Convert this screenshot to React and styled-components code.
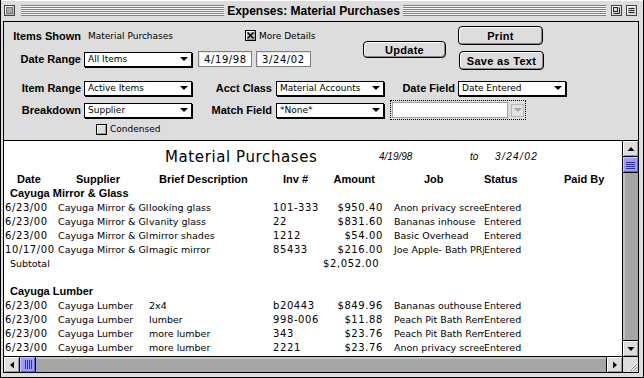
import React from "react";
import styled, { createGlobalStyle } from "styled-components";

const chicago = `"Liberation Sans", Arial, sans-serif`;
const geneva = `"DejaVu Sans", Verdana, sans-serif`;

const GlobalStyle = createGlobalStyle`
  html, body {
    margin: 0;
    padding: 0;
    background: #fff;
  }
  body {
    width: 644px;
    height: 378px;
    overflow: hidden;
  }
  * {
    box-sizing: border-box;
  }
`;

const Window = styled.div`
  width: 644px;
  height: 378px;
  background: #dddddd;
  border: 1px solid #000;
  border-top: none;
  display: flex;
  flex-direction: column;
`;

const TitleBar = styled.div`
  height: 21px;
  flex: none;
  display: flex;
  align-items: center;
  padding: 0 6px 0 3px;
  background: #dddddd;
  box-shadow: inset 0 1px 0 #fff;
`;

const Stripes = styled.div`
  flex: 1;
  height: 11px;
  background: repeating-linear-gradient(
    to bottom,
    #808080 0,
    #808080 1px,
    #f8f8f8 1px,
    #f8f8f8 2px
  );
  margin-left: ${(p) => p.$ml || 0}px;
  margin-right: ${(p) => p.$mr || 0}px;
`;

const TitleText = styled.div`
  font: bold 12px ${chicago};
  color: #000;
  padding: 0 3px;
  white-space: nowrap;
`;

const BoxIcon = styled.svg`
  flex: none;
  display: block;
  margin-left: ${(p) => p.$ml || 0}px;
`;

const Content = styled.div`
  flex: 1;
  margin: 0 4px 4px 2px;
  border: 1px solid #000;
  display: flex;
  flex-direction: column;
  min-height: 0;
`;

const Panel = styled.div`
  height: 119px;
  flex: none;
  border-bottom: 1px solid #000;
  background: #dddddd;
  display: flex;
  flex-direction: column;
`;

const TopSection = styled.div`
  display: flex;
  align-items: flex-start;
  height: 48px;
`;

const LeftBlock = styled.div`
  width: 308px;
  display: flex;
  flex-direction: column;
`;

const Row = styled.div`
  display: flex;
  align-items: center;
  height: ${(p) => p.$h || 16}px;
  margin-top: ${(p) => p.$mt || 0}px;
  margin-left: ${(p) => p.$ml || 0}px;
`;

const Label = styled.div`
  width: ${(p) => p.$w}px;
  flex: none;
  text-align: right;
  font: bold 11px ${chicago};
  color: #000;
  margin-right: ${(p) => (p.$gap === undefined ? 4 : p.$gap)}px;
  white-space: nowrap;
`;

const Value = styled.div`
  width: ${(p) => p.$w}px;
  flex: none;
  padding-left: 4px;
  font: 9px ${geneva};
  color: #000;
  white-space: nowrap;
`;

const SmallText = styled.span`
  font: 9px ${geneva};
  color: #000;
  margin-left: 3px;
  white-space: nowrap;
`;

const PopupBox = styled.div`
  width: 108px;
  height: 15px;
  flex: none;
  border: 1px solid #000;
  box-shadow: 1px 1px 0 #000;
  background: #fff;
  display: flex;
  align-items: center;
  padding-left: 3px;
  margin-right: ${(p) => p.$mr || 0}px;
  font: 9px ${geneva};
  color: #000;
  white-space: nowrap;
`;

const PopupArrow = styled.span`
  margin-left: ${(p) => (p.$center ? 0 : "auto")};
  margin-right: ${(p) => (p.$center ? 0 : 3)}px;
  width: 0;
  height: 0;
  border-left: 4px solid transparent;
  border-right: 4px solid transparent;
  border-top: 4px solid ${(p) => p.$color || "#000"};
`;

const DateField = styled.div`
  width: ${(p) => p.$w}px;
  height: 16px;
  flex: none;
  margin-left: ${(p) => p.$ml || 0}px;
  border: 1px solid #808080;
  box-shadow: inset 1px 1px 0 #e6e6e6;
  background: #fff;
  padding-left: 5px;
  display: flex;
  align-items: center;
  font: 10px ${geneva};
  letter-spacing: 0.6px;
  color: #000;
`;

const MacButton = styled.div`
  width: ${(p) => p.$w}px;
  height: ${(p) => p.$h}px;
  flex: none;
  border: 1px solid #000;
  border-radius: 4px;
  background: #dddddd;
  box-shadow: inset 1px 1px 0 #fff, inset -1px -1px 0 #8a8a8a;
  display: flex;
  align-items: center;
  justify-content: center;
  font: bold 11px ${chicago};
  letter-spacing: 0.3px;
  color: #000;
  margin-top: ${(p) => p.$mt || 0}px;
  margin-left: ${(p) => p.$ml || 0}px;
`;

const ButtonColumn = styled.div`
  display: flex;
  flex-direction: column;
  gap: 6px;
  margin-top: 4px;
  margin-left: 12px;
`;

const FocusRing = styled.div`
  width: 136px;
  height: 20px;
  flex: none;
  margin-left: 6px;
  border: 1px dotted #000;
  padding: 1px;
  display: flex;
  align-items: center;
`;

const DisabledInput = styled.div`
  width: 116px;
  height: 16px;
  border: 1px solid #a0a0a0;
  background: #fff;
`;

const DisabledArrow = styled.div`
  width: 13px;
  height: 13px;
  margin-left: 3px;
  border: 1px solid #b8b8b8;
  background: #e2e2e2;
  display: flex;
  align-items: center;
  justify-content: center;
`;

const ScrollArea = styled.div`
  flex: 1;
  min-height: 0;
  display: grid;
  grid-template-columns: 1fr 16px;
  grid-template-rows: 1fr 16px;
`;

const Report = styled.div`
  background: #fff;
  overflow: hidden;
  padding-left: 1px;
  min-height: 0;
`;

const ReportTitleRow = styled.div`
  height: 31px;
  display: flex;
  align-items: center;
  padding-left: 160px;
`;

const ReportTitle = styled.div`
  font: 15px ${geneva};
  letter-spacing: 0.6px;
  color: #000;
  width: 214px;
  white-space: nowrap;
`;

const ItalicDate = styled.div`
  font: italic 10px ${chicago};
  letter-spacing: ${(p) => p.$ls || 0}px;
  color: #000;
  width: ${(p) => p.$w}px;
  flex: none;
`;

const cols = "53px 91px 124px 50px 60px 101px 80px 1fr";

const HeaderRow = styled.div`
  display: grid;
  grid-template-columns: ${cols};
  height: 14px;
  align-items: center;
  font: bold 11px ${chicago};
  color: #000;
`;

const HeadCell = styled.div`
  padding-left: ${(p) => p.$pl || 0}px;
  padding-right: ${(p) => p.$pr || 0}px;
  text-align: ${(p) => (p.$right ? "right" : "left")};
  white-space: nowrap;
`;

const GroupHeader = styled.div`
  height: 14px;
  display: flex;
  align-items: center;
  padding-left: 5px;
  font: bold 11px ${chicago};
  color: #000;
`;

const DataRow = styled.div`
  display: grid;
  grid-template-columns: ${cols};
  height: 14px;
  align-items: center;
  font: 9.5px ${geneva};
  color: #000;
`;

const Cell = styled.div`
  overflow: hidden;
  white-space: nowrap;
  padding-left: ${(p) => p.$pl || 0}px;
  padding-right: ${(p) => p.$pr || 0}px;
  text-align: ${(p) => (p.$right ? "right" : "left")};
  grid-column: ${(p) => p.$span || "auto"};
  font-size: ${(p) => (p.$num ? "10px" : "inherit")};
  letter-spacing: ${(p) => (p.$num ? "0.6px" : "normal")};
`;

const Spacer = styled.div`
  height: 14px;
`;

const VScroll = styled.div`
  border-left: 1px solid #000;
  display: flex;
  flex-direction: column;
  background: #a6a6a6;
  box-shadow: inset 2px 0 0 #c2c2c2;
  min-height: 0;
`;

const HScroll = styled.div`
  border-top: 1px solid #000;
  display: flex;
  background: #a6a6a6;
  box-shadow: inset 0 2px 0 #c2c2c2;
`;

const ArrowBox = styled.div`
  flex: none;
  width: ${(p) => (p.$horiz ? "16px" : "auto")};
  height: ${(p) => (p.$horiz ? "auto" : "16px")};
  background: #dddddd;
  box-shadow: inset 1px 1px 0 #fff, inset -1px -1px 0 #999;
  display: flex;
  align-items: center;
  justify-content: center;
  ${(p) => p.$side}: 1px solid #000;
  margin-top: ${(p) => (p.$end && !p.$horiz ? "auto" : 0)};
  margin-left: ${(p) => (p.$end && p.$horiz ? "auto" : 0)};
`;

const Thumb = styled.div`
  flex: none;
  width: ${(p) => (p.$horiz ? "16px" : "auto")};
  height: ${(p) => (p.$horiz ? "auto" : "16px")};
  background: #9c9cff;
  box-shadow: inset 1px 1px 0 #ccccff, inset -1px -1px 0 #6666cc;
  ${(p) => (p.$horiz ? "border-right" : "border-bottom")}: 1px solid #000;
  display: flex;
  align-items: center;
  justify-content: center;
`;

const GrowBox = styled.div`
  border-top: 1px solid #000;
  border-left: 1px solid #000;
  background: #dddddd;
  display: flex;
  align-items: flex-end;
  justify-content: flex-end;
`;

const Triangle = ({ dir }) => {
  const d = {
    up: "M0.5 5L4 1L7.5 5Z",
    down: "M0.5 1L4 5L7.5 1Z",
    left: "M5 0.5L1 4L5 7.5Z",
    right: "M1 0.5L5 4L1 7.5Z",
  }[dir];
  const horiz = dir === "left" || dir === "right";
  return (
    <svg width={horiz ? 6 : 8} height={horiz ? 8 : 6} viewBox={horiz ? "0 0 6 8" : "0 0 8 6"}>
      <path d={d} fill="#000" />
    </svg>
  );
};

const Grip = ({ horiz }) => (
  <svg width={horiz ? 8 : 9} height={horiz ? 9 : 8}>
    {[0, 2, 4, 6].map((o) =>
      horiz ? (
        <rect key={o} x={o + 1} y="0" width="1" height="9" fill="#333399" />
      ) : (
        <rect key={o} x="0" y={o + 1} width="9" height="1" fill="#333399" />
      )
    )}
  </svg>
);

const Checkbox = ({ checked }) => (
  <svg width="11" height="11" viewBox="0 0 11 11" style={{ display: "block", flex: "none" }}>
    <rect x="0.5" y="0.5" width="10" height="10" fill={checked ? "#c8c8c8" : "#dcdcdc"} stroke="#000" />
    <path d="M1.5 9V1.5H9" stroke="#fff" fill="none" />
    <path d="M2 9.5H9.5V2" stroke="#999" fill="none" />
    {checked && (
      <path d="M2.5 2.5L8.5 8.5M8.5 2.5L2.5 8.5" stroke="#000" strokeWidth="1.7" />
    )}
  </svg>
);

const Popup = ({ children, mr }) => (
  <PopupBox $mr={mr}>
    {children}
    <PopupArrow />
  </PopupBox>
);

const groups = [
  {
    name: "Cayuga Mirror & Glass",
    rows: [
      ["6/23/00", "Cayuga Mirror & Glass", "looking glass", "101-333", "$950.40", "Anon privacy screen", "Entered"],
      ["6/23/00", "Cayuga Mirror & Glass", "vanity glass", "22", "$831.60", "Bananas inhouse", "Entered"],
      ["6/23/00", "Cayuga Mirror & Glass", "mirror shades", "1212", "$54.00", "Basic Overhead", "Entered"],
      ["10/17/00", "Cayuga Mirror & Glass", "magic mirror", "85433", "$216.00", "Joe Apple- Bath PRJ", "Entered"],
    ],
    subtotal: "$2,052.00",
  },
  {
    name: "Cayuga Lumber",
    rows: [
      ["6/23/00", "Cayuga Lumber", "2x4", "b20443", "$849.96", "Bananas outhouse", "Entered"],
      ["6/23/00", "Cayuga Lumber", "lumber", "998-006", "$11.88", "Peach Pit Bath Remodel", "Entered"],
      ["6/23/00", "Cayuga Lumber", "more lumber", "343", "$23.76", "Peach Pit Bath Remodel", "Entered"],
      ["6/23/00", "Cayuga Lumber", "more lumber", "2221", "$23.76", "Anon privacy screen", "Entered"],
    ],
  },
];

const App = () => {
  return (
    <>
      <GlobalStyle />
      <Window>
        <TitleBar>
          <BoxIcon width="11" height="11" viewBox="0 0 11 11">
            <rect x="0.5" y="0.5" width="10" height="10" fill="#bdbdbd" stroke="#444" />
            <path d="M1.5 9V1.5H9" stroke="#fff" fill="none" />
            <rect x="2.5" y="2.5" width="6" height="6" fill="#a8a8a8" stroke="#777" />
          </BoxIcon>
          <Stripes $ml={6} />
          <TitleText>Expenses: Material Purchases</TitleText>
          <Stripes $mr={5} />
          <BoxIcon width="11" height="11" viewBox="0 0 11 11">
            <rect x="0.5" y="0.5" width="10" height="10" fill="#dcdcdc" stroke="#444" />
            <path d="M1.5 9V1.5H9" stroke="#fff" fill="none" />
            <rect x="2.5" y="2.5" width="4" height="4" fill="none" stroke="#222" />
            <path d="M2.5 8.5H8.5V2.5" stroke="#222" fill="none" />
          </BoxIcon>
          <BoxIcon $ml={4} width="11" height="11" viewBox="0 0 11 11">
            <rect x="0.5" y="0.5" width="10" height="10" fill="#dcdcdc" stroke="#444" />
            <path d="M1.5 9V1.5H9" stroke="#fff" fill="none" />
            <path d="M2.5 3.5H8.5M2.5 5.5H8.5M2.5 7.5H8.5" stroke="#222" />
          </BoxIcon>
        </TitleBar>

        <Content>
          <Panel>
            <TopSection>
              <LeftBlock>
                <Row $h={13} $mt={7}>
                  <Label $w={77} $gap={3}>Items Shown</Label>
                  <Value $w={161}>Material Purchases</Value>
                  <Checkbox checked />
                  <SmallText>More Details</SmallText>
                </Row>
                <Row $mt={9}>
                  <Label $w={77} $gap={3}>Date Range</Label>
                  <Popup mr={1}>All Items</Popup>
                  <DateField $w={54} $ml={5}>4/19/98</DateField>
                  <DateField $w={55} $ml={4}>3/24/02</DateField>
                </Row>
              </LeftBlock>
              <MacButton $w={83} $h={17} $mt={19} $ml={51}>
                Update
              </MacButton>
              <ButtonColumn>
                <MacButton $w={85} $h={19}>Print</MacButton>
                <MacButton $w={85} $h={19} $ml={1}>Save as Text</MacButton>
              </ButtonColumn>
            </TopSection>

            <Row $mt={10}>
              <Label $w={77} $gap={3}>Item Range</Label>
              <Popup mr={1}>Active Items</Popup>
              <Label $w={79}>Acct Class</Label>
              <Popup mr={1}>Material Accounts</Popup>
              <Label $w={70} $gap={3}>Date Field</Label>
              <Popup>Date Entered</Popup>
            </Row>
            <Row $mt={6}>
              <Label $w={77} $gap={3}>Breakdown</Label>
              <Popup mr={1}>Supplier</Popup>
              <Label $w={79}>Match Field</Label>
              <Popup>*None*</Popup>
              <FocusRing>
                <DisabledInput />
                <DisabledArrow>
                  <PopupArrow $center $color="#a8a8a8" />
                </DisabledArrow>
              </FocusRing>
            </Row>
            <Row $h={12} $mt={5} $ml={92}>
              <Checkbox />
              <SmallText>Condensed</SmallText>
            </Row>
          </Panel>

          <ScrollArea>
            <Report>
              <ReportTitleRow>
                <ReportTitle>Material Purchases</ReportTitle>
                <ItalicDate $w={91}>4/19/98</ItalicDate>
                <ItalicDate $w={25}>to</ItalicDate>
                <ItalicDate $w={50} $ls={1.4}>3/24/02</ItalicDate>
              </ReportTitleRow>
              <HeaderRow>
                <HeadCell $pl={12}>Date</HeadCell>
                <HeadCell $pl={18}>Supplier</HeadCell>
                <HeadCell $pl={10}>Brief Description</HeadCell>
                <HeadCell $pl={10}>Inv #</HeadCell>
                <HeadCell $right $pr={8}>Amount</HeadCell>
                <HeadCell $pl={41}>Job</HeadCell>
                <HeadCell>Status</HeadCell>
                <HeadCell>Paid By</HeadCell>
              </HeaderRow>
              {groups.map((g, gi) => (
                <React.Fragment key={g.name}>
                  {gi > 0 && <Spacer />}
                  <GroupHeader>{g.name}</GroupHeader>
                  {g.rows.map((r, i) => (
                    <DataRow key={i}>
                      <Cell $num>{r[0]}</Cell>
                      <Cell>{r[1]}</Cell>
                      <Cell>{r[2]}</Cell>
                      <Cell $num>{r[3]}</Cell>
                      <Cell $num $right>{r[4]}</Cell>
                      <Cell $pl={11}>{r[5]}</Cell>
                      <Cell>{r[6]}</Cell>
                      <Cell />
                    </DataRow>
                  ))}
                  {g.subtotal && (
                    <DataRow>
                      <Cell $span="1 / 5" $pl={5}>Subtotal</Cell>
                      <Cell $num $right $pr={4}>{g.subtotal}</Cell>
                    </DataRow>
                  )}
                </React.Fragment>
              ))}
            </Report>

            <VScroll>
              <ArrowBox $side="border-bottom">
                <Triangle dir="up" />
              </ArrowBox>
              <Thumb>
                <Grip />
              </Thumb>
              <ArrowBox $side="border-top" $end>
                <Triangle dir="down" />
              </ArrowBox>
            </VScroll>

            <HScroll>
              <ArrowBox $horiz $side="border-right">
                <Triangle dir="left" />
              </ArrowBox>
              <Thumb $horiz>
                <Grip horiz />
              </Thumb>
              <ArrowBox $horiz $side="border-left" $end>
                <Triangle dir="right" />
              </ArrowBox>
            </HScroll>

            <GrowBox>
              <svg width="13" height="13" viewBox="0 0 13 13">
                {[0, 3, 6].map((o) => (
                  <g key={o}>
                    <path d={`M${4 + o} 12L12 ${4 + o}`} stroke="#fff" />
                    <path d={`M${5 + o} 12L12 ${5 + o}`} stroke="#888" />
                  </g>
                ))}
              </svg>
            </GrowBox>
          </ScrollArea>
        </Content>
      </Window>
    </>
  );
};

export default App;
